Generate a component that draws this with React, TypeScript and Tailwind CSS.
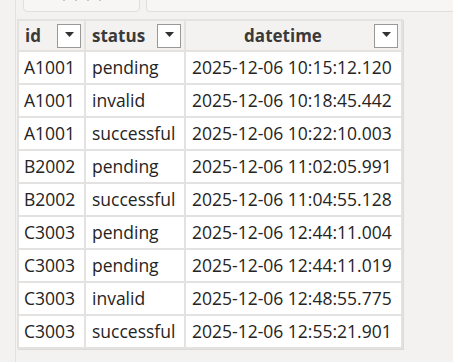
const rows = [
  ["A1001", "pending", "2025-12-06 10:15:12.120"],
  ["A1001", "invalid", "2025-12-06 10:18:45.442"],
  ["A1001", "successful", "2025-12-06 10:22:10.003"],
  ["B2002", "pending", "2025-12-06 11:02:05.991"],
  ["B2002", "successful", "2025-12-06 11:04:55.128"],
  ["C3003", "pending", "2025-12-06 12:44:11.004"],
  ["C3003", "pending", "2025-12-06 12:44:11.019"],
  ["C3003", "invalid", "2025-12-06 12:48:55.775"],
  ["C3003", "successful", "2025-12-06 12:55:21.901"],
];

function FilterButton() {
  return (
    <div className="flex h-[24px] w-[24px] shrink-0 items-start justify-center border-[1.5px] border-[#9a9896] bg-white pt-[7px]">
      <svg width="9" height="5" viewBox="0 0 9 5">
        <path d="M0 0h9L4.5 5z" fill="#323130" />
      </svg>
    </div>
  );
}

function HeaderCell({ label, width, center }: { label: string; width: string; center?: boolean }) {
  return (
    <div
      className={`flex h-[29px] items-center border-r-2 border-[#e4e2e0] pl-[6px] pr-[3px] ${width}`}
    >
      <span
        className={`flex-1 text-[17px] font-bold text-[#3b3a39] ${center ? "text-center" : ""}`}
      >
        {label}
      </span>
      <FilterButton />
    </div>
  );
}

export default function App() {
  return (
    <div
      className="flex h-[362px] w-[453px] overflow-hidden bg-[#f3f2f1] text-[17.5px] text-[#252423]"
      style={{ fontFamily: '"Open Sans", "Noto Sans", sans-serif' }}
    >
      <div className="w-[16px] shrink-0 border-r border-[#e3e1df] bg-[#f3f2f1]" />
      <div className="flex flex-1 flex-col">
        <div className="flex h-[12px] gap-[6px] pl-[7px]">
          <div className="-mt-[4px] flex w-[117px] items-start justify-center gap-[10px] rounded-b-[4px] border border-[#e1dfdd] bg-[#f7f6f5] pt-[1px]">
            <div className="h-[3px] w-[2px] bg-[#c8c6c4]" />
            <div className="h-[3px] w-[2px] bg-[#c8c6c4]" />
            <div className="h-[3px] w-[2px] bg-[#c8c6c4]" />
            <div className="h-[3px] w-[2px] bg-[#c8c6c4]" />
          </div>
          <div className="-mt-[4px] flex-1 rounded-bl-[4px] border border-r-0 border-[#e1dfdd] bg-[#f7f6f5]" />
        </div>
        <div className="mt-[7px] ml-[1px] flex w-[386px] flex-col border-t-2 border-l-2 border-[#e4e2e0] shadow-[1px_1px_0_#dcdad8]">
          <div className="flex border-b-2 border-[#e4e2e0] bg-[#f3f2f1]">
            <HeaderCell label="id" width="w-[67px]" />
            <HeaderCell label="status" width="w-[100px]" />
            <HeaderCell label="datetime" width="w-[217px]" center />
          </div>
          {rows.map((r, i) => (
            <div key={i} className="flex border-b-2 border-[#e4e2e0] bg-white">
              <div className="flex h-[31px] w-[67px] items-center border-r-2 border-[#e4e2e0] pl-[5px]">
                {r[0]}
              </div>
              <div className="flex h-[31px] w-[100px] items-center border-r-2 border-[#e4e2e0] pl-[6px]">
                {r[1]}
              </div>
              <div className="flex h-[31px] w-[217px] items-center border-r-2 border-[#e4e2e0] pl-[6px]">
                {r[2]}
              </div>
            </div>
          ))}
        </div>
      </div>
    </div>
  );
}
